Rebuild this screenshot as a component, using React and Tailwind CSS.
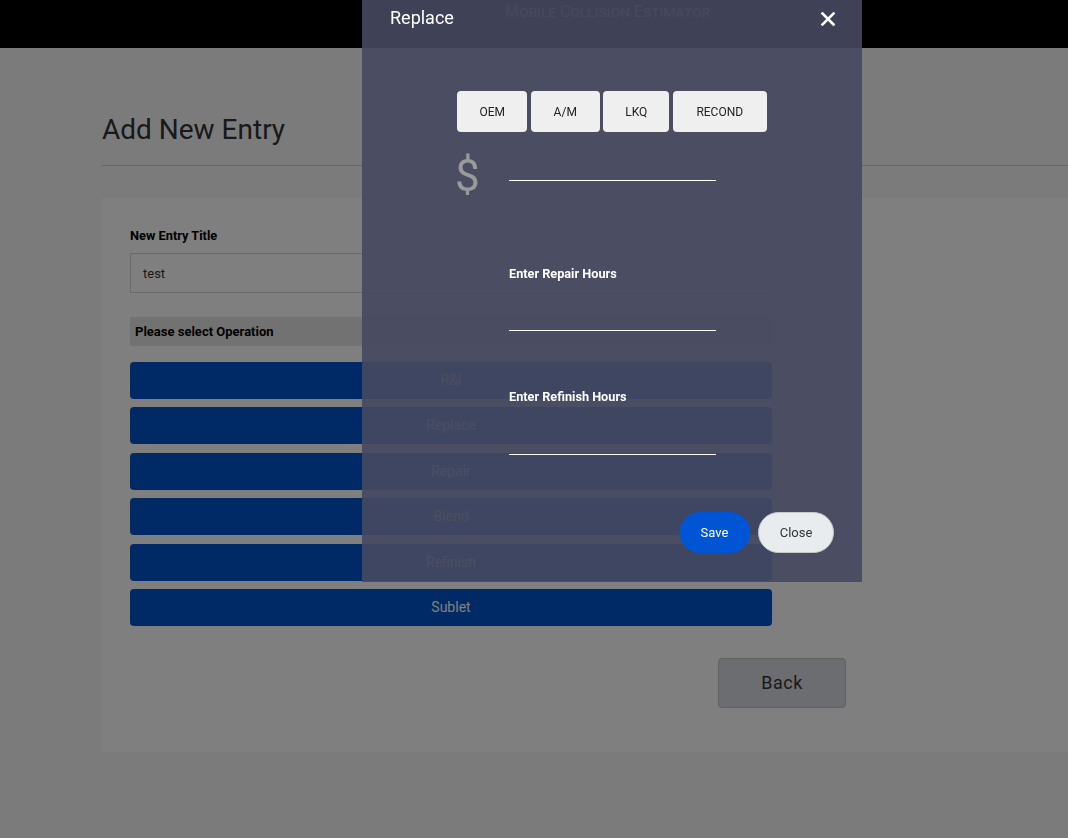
import { useState } from "react";

const operations = ["R&I", "Replace", "Repair", "Blend", "Refinish", "Sublet"];

const partTypes = [
  { label: "OEM", w: "w-[70px]" },
  { label: "A/M", w: "w-[69px]" },
  { label: "LKQ", w: "w-[66px]" },
  { label: "RECOND", w: "w-[94px]" },
];

function ReplaceModal({ onClose }) {
  const [price, setPrice] = useState("");
  const [repair, setRepair] = useState("");
  const [refinish, setRefinish] = useState("");

  return (
    <div className="fixed top-0 left-[362px] w-[500px] bg-[#464961]/90 text-white">
      <div className="flex items-center justify-between h-[36px] px-[28px]">
        <span className="text-[18px] leading-[28px]">Replace</span>
        <button onClick={onClose} className="w-[16px] h-[16px] mt-[2px] mr-[-2px]">
          <svg viewBox="0 0 16 16" width="16" height="16">
            <path d="M2.5 2.5 L13.5 13.5 M13.5 2.5 L2.5 13.5" stroke="white" strokeWidth="2.6" strokeLinecap="square" />
          </svg>
        </button>
      </div>

      <div className="flex justify-center gap-[3.5px] mt-[55px]">
        {partTypes.map((p) => (
          <button
            key={p.label}
            className={`${p.w} h-[41px] rounded bg-[#efefef] text-[12px] text-[#222]`}
          >
            {p.label}
          </button>
        ))}
      </div>

      <div className="flex items-start h-[30px] pl-[93px] mt-[19px]">
        <span className="w-[22px] mt-[3px] text-[44px] leading-[44px] text-[#9a9a9a]">$</span>
        <input
          className="ml-[32px] w-[207px] h-[30px] bg-transparent border-b border-white outline-none text-white text-sm"
          value={price}
          onChange={(e) => setPrice(e.target.value)}
        />
      </div>

      <div className="pl-[147px]">
        <div className="mt-[85px] text-[12.7px] leading-[16px] font-bold">Enter Repair Hours</div>
        <input
          className="mt-[19px] block w-[207px] h-[30px] bg-transparent border-b border-white outline-none text-white text-sm"
          value={repair}
          onChange={(e) => setRepair(e.target.value)}
        />
        <div className="mt-[58px] text-[12.7px] leading-[16px] font-bold">Enter Refinish Hours</div>
        <input
          className="mt-[20px] block w-[207px] h-[30px] bg-transparent border-b border-white outline-none text-white text-sm"
          value={refinish}
          onChange={(e) => setRefinish(e.target.value)}
        />
      </div>

      <div className="flex justify-end gap-[8px] pr-[28px] mt-[57px] pb-[29px]">
        <button className="w-[71px] h-[41px] rounded-full bg-[#0055d4] text-white text-[13px]">Save</button>
        <button
          onClick={onClose}
          className="w-[76px] h-[41px] rounded-full bg-[#e9ecef] border border-[#c8c8c8] text-[#333] text-[13px]"
        >
          Close
        </button>
      </div>
    </div>
  );
}

export default function App() {
  const [title, setTitle] = useState("test");
  const [open, setOpen] = useState(true);

  return (
    <div className="min-h-[838px] bg-[#f7f7f7] font-['Roboto',sans-serif] overflow-hidden">
      <header className="h-12 bg-black pl-[505px]">
        <span className="text-[16px] text-gray-400 [font-variant:small-caps]">
          Mobile Collision Estimator
        </span>
      </header>

      <div className="pl-[102px]">
        <h1 className="pt-[65px] text-[28px] leading-[34px] text-[#333]">Add New Entry</h1>
        <div className="mt-[18px] border-t border-[#cbcbcb]" />

        <div className="mt-[32px] bg-white pl-[28px] pt-[30px] pb-[44px]">
          <label className="block text-[12.8px] leading-[16px] font-bold text-black">
            New Entry Title
          </label>
          <input
            className="mt-[9px] block w-[642px] h-[40px] border border-[#d4d4d4] px-[12px] text-[13px] text-[#333] outline-none"
            value={title}
            onChange={(e) => setTitle(e.target.value)}
          />

          <div className="mt-[24px] w-[642px] h-[29px] bg-[#e4e4e4] flex items-center px-[5px] text-[13px] font-bold text-black">
            Please select Operation
          </div>

          <div className="mt-[16px] w-[642px] flex flex-col gap-[8.4px]">
            {operations.map((op) => (
              <button key={op} className="h-[37px] rounded bg-[#0054cc] text-white text-[14px]">
                {op}
              </button>
            ))}
          </div>

          <div className="w-[716px] flex justify-end mt-[32px]">
            <button className="w-[128px] h-[50px] rounded border border-[#c2c2c2] bg-[#d9dbe0] text-[18px] text-[#333] tracking-[0.5px]">
              Back
            </button>
          </div>
        </div>
      </div>

      {open && (
        <>
          <div className="fixed inset-0 bg-black/50" />
          <ReplaceModal onClose={() => setOpen(false)} />
        </>
      )}
    </div>
  );
}
